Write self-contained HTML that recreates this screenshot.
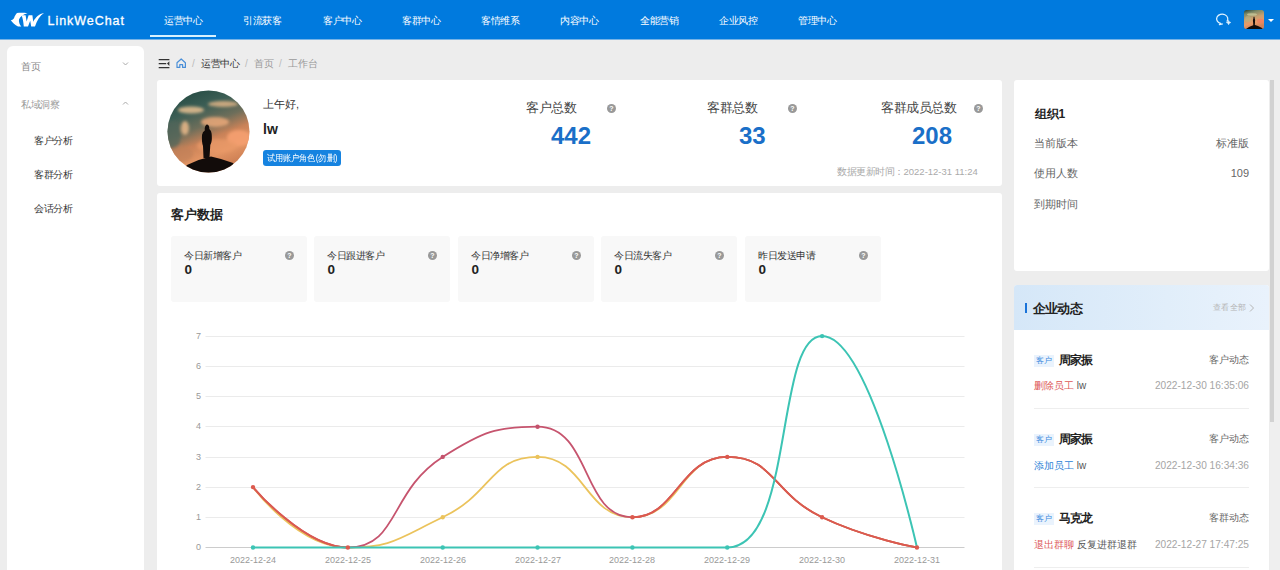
<!DOCTYPE html>
<html><head><meta charset="utf-8">
<style>
*{margin:0;padding:0;box-sizing:border-box}
html,body{width:1280px;height:570px;overflow:hidden}
body{position:relative;background:#ededed;font-family:"Liberation Sans",sans-serif;color:#333}
.a{position:absolute;white-space:nowrap}
#hdr{position:absolute;left:0;top:0;width:1280px;height:39px;background:#007ade}
.nav{position:absolute;top:13px;font-size:10px;letter-spacing:-0.4px;line-height:16px;color:#fff}
.card{position:absolute;background:#fff;border-radius:3px}
.q{position:absolute;width:9px;height:9px;border-radius:50%;background:#999;color:#fff;font-size:7px;line-height:9px;text-align:center;font-weight:bold}
.box{position:absolute;top:236px;width:136px;height:66px;background:#f8f8f8;border-radius:3px}
.box .t{position:absolute;left:13px;top:13.5px;font-size:10px;letter-spacing:-0.5px;line-height:12px;color:#333}
.box .v{position:absolute;left:13.5px;top:25px;font-size:13.5px;line-height:18px;font-weight:bold;color:#222}
.box .q{left:114px;top:15px}
.ylab{position:absolute;left:190px;width:11px;text-align:right;font-size:9px;line-height:10px;color:#999}
.xlab{position:absolute;top:555px;width:60px;text-align:center;font-size:9px;line-height:10px;color:#999}
</style></head><body>

<div id="hdr"></div>
<div class="a" style="left:0;top:39px;width:1280px;height:1px;background:#76b3e6"></div>
<!-- logo -->
<svg class="a" style="left:8px;top:8px" width="40" height="24" viewBox="8 8 40 24">
  <path d="M17,13 C20,12.8 24,12.8 27.5,13.2 C23,14.5 20,16.5 19,19.5 C18.6,22 19.6,24.5 21.3,26.6 L18,26.6 C15,25 12.5,22.5 10.8,20.3 C12.5,19.8 13.5,19 14,18.2 C14.8,16 15.8,14 17,13 Z" fill="#fff"/>
  <path d="M21.6,15.2 L25.6,15.2 L26.6,21.6 L28.6,15.2 L32.4,15.2 L33.2,21.8 C35.5,17.5 39,13.8 44,13.1 C40,15.5 37.2,20 35,26.6 L31.2,26.6 L30.2,20.8 L28,26.6 L23.8,26.6 C23.4,22 22.8,18.2 21.6,15.2 Z" fill="#fff"/>
</svg>
<div class="a" style="left:47.5px;top:12.5px;font-size:12.5px;line-height:16px;font-weight:normal;-webkit-text-stroke:0.3px #fff;color:#fff;letter-spacing:0.95px">LinkWeChat</div>

<div class="nav" style="left:164px">运营中心</div>
<div class="a" style="left:150px;top:35px;width:66px;height:2px;background:#d6f1ff"></div>
<div class="nav" style="left:243px">引流获客</div>
<div class="nav" style="left:323px">客户中心</div>
<div class="nav" style="left:402px">客群中心</div>
<div class="nav" style="left:481px">客情维系</div>
<div class="nav" style="left:560px">内容中心</div>
<div class="nav" style="left:640px">全能营销</div>
<div class="nav" style="left:719px">企业风控</div>
<div class="nav" style="left:798px">管理中心</div>

<!-- header right icons -->
<svg class="a" style="left:1212px;top:10px" width="24" height="18" viewBox="1212 10 24 18">
  <path d="M1226.8 21.6 A5.6 4.7 0 1 0 1220.6 23.4 L1219.4 24.6 L1222.8 23.8" fill="none" stroke="#dff2ff" stroke-width="1.25" stroke-linejoin="round"/>
  <path d="M1228.6 20.4 Q1228.9 22.2 1230.8 22.5 Q1228.9 22.8 1228.6 24.7 Q1228.3 22.8 1226.4 22.5 Q1228.3 22.2 1228.6 20.4Z" fill="#dff2ff" stroke="#dff2ff" stroke-width="0.6"/>
</svg>
<svg class="a" style="left:1244px;top:10px" width="20" height="19" viewBox="0 0 20 19">
  <defs>
    <clipPath id="hc"><rect x="0" y="0" width="20" height="19" rx="2.5"/></clipPath>
    <linearGradient id="hsky" x1="0" y1="0" x2="0.3" y2="1">
      <stop offset="0" stop-color="#1f4038"/>
      <stop offset="0.22" stop-color="#7d8a68"/>
      <stop offset="0.5" stop-color="#c8a070"/>
      <stop offset="0.75" stop-color="#e89a68"/>
      <stop offset="1" stop-color="#d08058"/>
    </linearGradient>
  </defs>
  <g clip-path="url(#hc)">
    <rect width="20" height="19" fill="url(#hsky)"/>
    <ellipse cx="8" cy="4.5" rx="5" ry="1.2" fill="#c8c898" opacity="0.8"/>
    <ellipse cx="4" cy="9" rx="3" ry="3" fill="#b8b080" opacity="0.6"/>
    <ellipse cx="16.5" cy="11" rx="3.5" ry="2.2" fill="#f08060" opacity="0.8"/>
    <path d="M2 19 L5 17 Q9 15 11 15 Q14 15.5 17 17.5 L19 19Z" fill="#120c0a"/>
    <path d="M9.3 16 L9.1 12 Q8.6 9.5 9.4 8.5 Q9.3 7 10 6.6 Q10.8 7 10.7 8.5 Q11.4 9.5 11 12 L10.8 16Z" fill="#120c0a"/>
  </g>
</svg>
<div class="a" style="left:1267.5px;top:19px;width:0;height:0;border-left:3px solid transparent;border-right:3px solid transparent;border-top:3.5px solid #fff"></div>

<!-- sidebar -->
<div class="card" style="left:7px;top:46px;width:137px;height:540px;border-radius:6px"></div>
<div class="a" style="left:21px;top:60px;font-size:10px;letter-spacing:-0.45px;line-height:14px;color:#888">首页</div>
<svg class="a" style="left:122px;top:61px" width="8" height="6" viewBox="0 0 8 6"><path d="M1 1.5 L3.5 4 L6 1.5" fill="none" stroke="#aaa" stroke-width="1"/></svg>
<div class="a" style="left:21px;top:98px;font-size:10px;letter-spacing:-0.45px;line-height:14px;color:#999">私域洞察</div>
<svg class="a" style="left:122px;top:100px" width="8" height="6" viewBox="0 0 8 6"><path d="M1 4.5 L3.5 2 L6 4.5" fill="none" stroke="#aaa" stroke-width="1"/></svg>
<div class="a" style="left:34px;top:134px;font-size:10px;letter-spacing:-0.45px;line-height:14px;color:#333">客户分析</div>
<div class="a" style="left:34px;top:168px;font-size:10px;letter-spacing:-0.45px;line-height:14px;color:#333">客群分析</div>
<div class="a" style="left:34px;top:202px;font-size:10px;letter-spacing:-0.45px;line-height:14px;color:#333">会话分析</div>

<!-- breadcrumb -->
<svg class="a" style="left:150px;top:50px" width="45" height="26" viewBox="150 50 45 26">
  <path d="M158.7 59.6H169.4M158.7 63.6H166.2M158.7 67.6H169.4" stroke="#333" stroke-width="1.3"/>
  <path d="M169.4 61.3 L167 63.6 L169.4 65.9Z" fill="#333"/>
  <path d="M177 67.4 V62.8 L181.2 59 L185.4 62.8 V67.4 H182.6 V64.6 H179.8 V67.4 Z" fill="none" stroke="#4a8fd8" stroke-width="1.2" stroke-linejoin="round"/>
</svg>
<div class="a" style="left:192px;top:57px;font-size:10px;line-height:14px;color:#bbb">/</div>
<div class="a" style="left:201px;top:57px;font-size:10px;letter-spacing:-0.35px;line-height:14px;color:#333">运营中心</div>
<div class="a" style="left:245px;top:57px;font-size:10px;line-height:14px;color:#bbb">/</div>
<div class="a" style="left:254px;top:57px;font-size:10px;line-height:14px;color:#999">首页</div>
<div class="a" style="left:279px;top:57px;font-size:10px;line-height:14px;color:#bbb">/</div>
<div class="a" style="left:288px;top:57px;font-size:10px;line-height:14px;color:#999">工作台</div>

<!-- card 1 -->
<div class="card" style="left:157px;top:80px;width:845px;height:106px"></div>
<svg class="a" style="left:167px;top:90px" width="83" height="83" viewBox="0 0 83 83">
  <defs>
    <clipPath id="cc"><circle cx="41.5" cy="41.5" r="41"/></clipPath>
    <linearGradient id="sky" x1="0.2" y1="0" x2="0.6" y2="1">
      <stop offset="0" stop-color="#244a42"/>
      <stop offset="0.25" stop-color="#3c5e55"/>
      <stop offset="0.45" stop-color="#6e6e5a"/>
      <stop offset="0.62" stop-color="#c98258"/>
      <stop offset="0.8" stop-color="#e39564"/>
      <stop offset="1" stop-color="#c87a50"/>
    </linearGradient>
    <filter id="bl" x="-30%" y="-30%" width="160%" height="160%"><feGaussianBlur stdDeviation="1.6"/></filter>
  </defs>
  <g clip-path="url(#cc)">
    <rect width="83" height="83" fill="url(#sky)"/>
    <g filter="url(#bl)">
      <ellipse cx="6" cy="45" rx="8" ry="14" fill="#4f6558" opacity="0.7"/>
      <ellipse cx="24" cy="20" rx="13" ry="3.5" fill="#e8c090" opacity="0.85"/>
      <ellipse cx="56" cy="14" rx="15" ry="3" fill="#e6b888" opacity="0.8"/>
      <ellipse cx="18" cy="38" rx="4" ry="7" fill="#eab888" opacity="0.85"/>
      <ellipse cx="48" cy="32" rx="14" ry="5" fill="#eaa878" opacity="0.85"/>
      <ellipse cx="72" cy="48" rx="12" ry="8" fill="#f5a070" opacity="0.9"/>
      <ellipse cx="50" cy="56" rx="20" ry="7" fill="#eb9a68" opacity="0.7"/>
      <ellipse cx="14" cy="64" rx="12" ry="8" fill="#c08058" opacity="0.6"/>
    </g>
    <path d="M14 83 L20 75 Q32 69 44 66.5 Q56 69 66 73 L74 83Z" fill="#120c0a"/>
    <path d="M36.5 68 L36 56 Q34.5 52 35 45 Q35.5 41.5 37.8 40.5 Q37.3 36 39.7 34.5 Q42.5 34.5 42.3 39 Q44.8 41 44.8 46 Q45.2 52 43.3 55 L42.5 68Z" fill="#120c0a"/>
  </g>
</svg>
<div class="a" style="left:263px;top:97px;font-size:11px;line-height:14px;color:#333">上午好,</div>
<div class="a" style="left:263px;top:121px;font-size:14px;line-height:16px;font-weight:bold;color:#222">lw</div>
<div class="a" style="left:263px;top:150px;width:78px;height:16px;background:#1683e0;border-radius:3px;color:#fff;font-size:9px;line-height:16px;text-align:center"><span style="display:inline-block;transform:scaleX(0.91);transform-origin:50% 50%">试用账户角色(勿删)</span></div>

<div class="a" style="left:526px;top:100px;font-size:13px;letter-spacing:-0.5px;line-height:16px;color:#444">客户总数</div>
<div class="q" style="left:607px;top:104px">?</div>
<div class="a" style="left:551px;top:123px;font-size:24px;line-height:26px;font-weight:bold;color:#1a6fc8">442</div>
<div class="a" style="left:707px;top:100px;font-size:13px;letter-spacing:-0.5px;line-height:16px;color:#444">客群总数</div>
<div class="q" style="left:788px;top:104px">?</div>
<div class="a" style="left:739px;top:123px;font-size:24px;line-height:26px;font-weight:bold;color:#1a6fc8">33</div>
<div class="a" style="left:881px;top:100px;font-size:13px;letter-spacing:-0.5px;line-height:16px;color:#444">客群成员总数</div>
<div class="q" style="left:974px;top:104px">?</div>
<div class="a" style="left:912px;top:123px;font-size:24px;line-height:26px;font-weight:bold;color:#1a6fc8">208</div>
<div class="a" style="left:837px;top:166px;font-size:9.5px;line-height:12px;color:#aaa"><span style="font-size:10px;letter-spacing:-0.5px">数据更新时间：</span>2022-12-31 11:24</div>

<!-- card 2 -->
<div class="card" style="left:157px;top:193px;width:845px;height:400px"></div>
<div class="a" style="left:171px;top:206px;font-size:13px;line-height:18px;font-weight:bold;color:#222">客户数据</div>
<div class="box" style="left:171px"><div class="t">今日新增客户</div><div class="v">0</div><div class="q">?</div></div>
<div class="box" style="left:314px"><div class="t">今日跟进客户</div><div class="v">0</div><div class="q">?</div></div>
<div class="box" style="left:458px"><div class="t">今日净增客户</div><div class="v">0</div><div class="q">?</div></div>
<div class="box" style="left:601px"><div class="t">今日流失客户</div><div class="v">0</div><div class="q">?</div></div>
<div class="box" style="left:745px"><div class="t">昨日发送申请</div><div class="v">0</div><div class="q">?</div></div>

<!-- chart labels -->
<div class="ylab" style="top:331px">7</div>
<div class="ylab" style="top:361px">6</div>
<div class="ylab" style="top:391px">5</div>
<div class="ylab" style="top:421px">4</div>
<div class="ylab" style="top:452px">3</div>
<div class="ylab" style="top:482px">2</div>
<div class="ylab" style="top:512px">1</div>
<div class="ylab" style="top:542px">0</div>
<div class="xlab" style="left:223px">2022-12-24</div>
<div class="xlab" style="left:318px">2022-12-25</div>
<div class="xlab" style="left:413px">2022-12-26</div>
<div class="xlab" style="left:508px">2022-12-27</div>
<div class="xlab" style="left:602px">2022-12-28</div>
<div class="xlab" style="left:697px">2022-12-29</div>
<div class="xlab" style="left:792px">2022-12-30</div>
<div class="xlab" style="left:887px">2022-12-31</div>

<svg class="a" style="left:0;top:0" width="1280" height="570" viewBox="0 0 1280 570">
  <g stroke="#ebebeb" stroke-width="1">
    <path d="M205.5 336.5H964.5M205.5 366.5H964.5M205.5 396.5H964.5M205.5 426.5H964.5M205.5 457.5H964.5M205.5 487.5H964.5M205.5 517.5H964.5"/>
  </g>
  <path d="M205.5 547.5H964.5" stroke="#ccc" stroke-width="1"/>
  <defs>
    <clipPath id="cl"><rect x="0" y="0" width="348" height="570"/><rect x="632" y="0" width="400" height="570"/></clipPath>
  </defs>
  <g fill="none" stroke-width="2">
    <path stroke="#ebc35c" stroke-width="1.8" d="M253.00,487.10 C253.00,487.10 297.54,547.50 347.85,547.50 C392.39,547.50 398.16,538.57 442.70,517.30 C493.01,493.27 490.12,456.90 537.55,456.90 C584.97,456.90 584.97,517.30 632.40,517.30 C679.83,517.30 679.83,456.90 727.25,456.90 C774.67,456.90 771.79,493.27 822.10,517.30 C866.64,538.57 916.95,547.50 916.95,547.50"/>
    <path stroke="#c6546e" stroke-width="1.8" d="M253.00,487.10 C253.00,487.10 304.07,547.50 347.85,547.50 C398.92,547.50 388.77,491.24 442.70,456.90 C483.62,430.84 496.63,426.70 537.55,426.70 C591.48,426.70 581.33,517.30 632.40,517.30 C676.18,517.30 679.83,456.90 727.25,456.90 C774.67,456.90 771.79,493.27 822.10,517.30 C866.64,538.57 916.95,547.50 916.95,547.50"/>
    <path stroke="#dc5a4e" stroke-width="1.8" clip-path="url(#cl)" d="M253.00,487.10 C253.00,487.10 304.07,547.50 347.85,547.50 C398.92,547.50 388.77,491.24 442.70,456.90 C483.62,430.84 496.63,426.70 537.55,426.70 C591.48,426.70 581.33,517.30 632.40,517.30 C676.18,517.30 679.83,456.90 727.25,456.90 C774.67,456.90 771.79,493.27 822.10,517.30 C866.64,538.57 916.95,547.50 916.95,547.50"/>
    <path stroke="#3cc4b4" d="M253.00,547.50 C253.00,547.50 300.43,547.50 347.85,547.50 C395.27,547.50 395.27,547.50 442.70,547.50 C490.12,547.50 490.12,547.50 537.55,547.50 C584.97,547.50 584.97,547.50 632.40,547.50 C679.83,547.50 699.70,547.50 727.25,547.50 C794.55,547.50 774.67,336.10 822.10,336.10 C869.52,336.10 916.95,547.50 916.95,547.50"/>
  </g>
  <g fill="#ebc35c"><circle cx="442.7" cy="517.3" r="2.2"/><circle cx="537.55" cy="456.9" r="2.2"/></g>
  <g fill="#c4526c"><circle cx="442.7" cy="456.9" r="2.2"/><circle cx="537.55" cy="426.7" r="2.2"/></g>
  <g fill="#dc5a4e"><circle cx="253" cy="487.1" r="2.2"/><circle cx="347.85" cy="547.5" r="2.2"/><circle cx="632.4" cy="517.3" r="2.2"/><circle cx="727.25" cy="456.9" r="2.2"/><circle cx="822.1" cy="517.3" r="2.2"/><circle cx="916.95" cy="547.5" r="2.2"/></g>
  <g fill="#3cc4b4"><circle cx="253" cy="547.5" r="2.2"/><circle cx="442.7" cy="547.5" r="2.2"/><circle cx="537.55" cy="547.5" r="2.2"/><circle cx="632.4" cy="547.5" r="2.2"/><circle cx="727.25" cy="547.5" r="2.2"/><circle cx="822.1" cy="336.1" r="2.2"/></g>
</svg>

<!-- right panel -->
<div class="card" style="left:1014px;top:80px;width:255px;height:191px"></div>
<div class="a" style="left:1034.5px;top:105.5px;font-size:12px;line-height:16px;font-weight:bold;color:#222">组织1</div>
<div class="a" style="left:1034px;top:136px;font-size:11px;line-height:14px;color:#666">当前版本</div>
<div class="a" style="left:1150px;top:136px;width:99px;text-align:right;font-size:11px;line-height:14px;color:#666">标准版</div>
<div class="a" style="left:1034px;top:166px;font-size:11px;line-height:14px;color:#666">使用人数</div>
<div class="a" style="left:1150px;top:166px;width:99px;text-align:right;font-size:11px;line-height:14px;color:#666">109</div>
<div class="a" style="left:1034px;top:197px;font-size:11px;line-height:14px;color:#666">到期时间</div>

<div class="card" style="left:1014px;top:285px;width:255px;height:300px;overflow:hidden">
  <div style="position:absolute;left:0;top:0;width:255px;height:45px;background:linear-gradient(90deg,#d5e7f8 0%,#e1eefa 60%,#e9f2fc 100%)"></div>
</div>
<div class="a" style="left:1025px;top:303px;width:2px;height:10px;background:#1a73d9"></div>
<div class="a" style="left:1033px;top:300.5px;font-size:13px;letter-spacing:-0.8px;line-height:16px;font-weight:bold;color:#222">企业动态</div>
<div class="a" style="left:1213px;top:302px;font-size:8px;letter-spacing:0.3px;line-height:12px;color:#b5b5b5">查看全部</div><svg class="a" style="left:1248px;top:303px" width="8" height="10" viewBox="0 0 8 10"><path d="M2 1.5 L5.5 5 L2 8.5" fill="none" stroke="#b5b5b5" stroke-width="1"/></svg>

<div class="a" style="left:1034px;top:355px;width:20px;height:12px;background:#eaf3fd;color:#3a8ade;font-size:8px;line-height:12px;text-align:center">客户</div>
<div class="a" style="left:1059px;top:353px;font-size:12px;letter-spacing:-1px;line-height:15px;font-weight:bold;color:#222">周家振</div>
<div class="a" style="left:1150px;top:353px;width:99px;text-align:right;font-size:9.5px;line-height:14px;color:#666">客户动态</div>
<div class="a" style="left:1034px;top:378.5px;font-size:10px;line-height:14px;color:#555"><span style="color:#dd5757">删除员工</span> lw</div>
<div class="a" style="left:1130px;top:378.5px;width:119px;text-align:right;font-size:10.15px;line-height:14px;color:#a5a5a5">2022-12-30 16:35:06</div>
<div class="a" style="left:1034px;top:408px;width:215px;height:1px;background:#eee"></div>

<div class="a" style="left:1034px;top:434px;width:20px;height:12px;background:#eaf3fd;color:#3a8ade;font-size:8px;line-height:12px;text-align:center">客户</div>
<div class="a" style="left:1059px;top:432px;font-size:12px;letter-spacing:-1px;line-height:15px;font-weight:bold;color:#222">周家振</div>
<div class="a" style="left:1150px;top:432px;width:99px;text-align:right;font-size:9.5px;line-height:14px;color:#666">客户动态</div>
<div class="a" style="left:1034px;top:458.5px;font-size:10px;line-height:14px;color:#555"><span style="color:#2a7fd6">添加员工</span> lw</div>
<div class="a" style="left:1130px;top:458.5px;width:119px;text-align:right;font-size:10.15px;line-height:14px;color:#a5a5a5">2022-12-30 16:34:36</div>
<div class="a" style="left:1034px;top:487px;width:215px;height:1px;background:#eee"></div>

<div class="a" style="left:1034px;top:513px;width:20px;height:12px;background:#eaf3fd;color:#3a8ade;font-size:8px;line-height:12px;text-align:center">客户</div>
<div class="a" style="left:1059px;top:511px;font-size:12px;letter-spacing:-1px;line-height:15px;font-weight:bold;color:#222">马克龙</div>
<div class="a" style="left:1150px;top:511px;width:99px;text-align:right;font-size:9.5px;line-height:14px;color:#666">客群动态</div>
<div class="a" style="left:1034px;top:537.5px;font-size:10px;line-height:14px;color:#555"><span style="color:#dd5757">退出群聊</span> 反复进群退群</div>
<div class="a" style="left:1130px;top:537.5px;width:119px;text-align:right;font-size:10.15px;line-height:14px;color:#a5a5a5">2022-12-27 17:47:25</div>
<div class="a" style="left:1034px;top:567px;width:215px;height:1px;background:#eee"></div>

<!-- scrollbar -->
<div class="a" style="left:1270px;top:80px;width:10px;height:490px;background:#efefef"></div>
<div class="a" style="left:1270px;top:80px;width:3.5px;height:342px;background:#d2d2d2"></div>

</body></html>
